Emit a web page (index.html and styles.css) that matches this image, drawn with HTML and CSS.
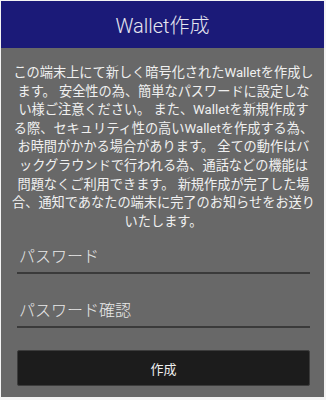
FILE: index.html
```html
<!DOCTYPE html>
<html lang="ja">
<head>
<meta charset="utf-8">
<link rel="stylesheet" href="styles.css">
</head>
<body>
<div class="screen">
  <header class="appbar">Wallet作成</header>
  <main class="content">
    <p class="notice">この端末上にて新しく暗号化されたWalletを作成し<br>ます。 安全性の為、簡単なパスワードに設定しな<br>い様ご注意ください。 また、Walletを新規作成す<br>る際、セキュリティ性の高いWalletを作成する為、<br>お時間がかかる場合があります。 全ての動作はバ<br>ックグラウンドで行われる為、通話などの機能は<br>問題なくご利用できます。 新規作成が完了した場<br>合、通知であなたの端末に完了のお知らせをお送り<br>いたします。</p>
    <div class="field">パスワード</div>
    <div class="field">パスワード確認</div>
    <button class="btn">作成</button>
  </main>
</div>
</body>
</html>
```
FILE: styles.css
```css
html, body {
  margin: 0;
  padding: 0;
  background: #f4f4f4;
}
.screen {
  width: 323px;
  height: 396px;
  margin: 1px 0 0 1px;
  background: #686868;
  display: flex;
  flex-direction: column;
  font-family: "Roboto", "Noto Sans CJK JP", sans-serif;
  overflow: hidden;
}
.appbar {
  height: 47px;
  background: #1b1a78;
  color: #e6e6f0;
  font-size: 20px;
  font-weight: 300;
  display: flex;
  align-items: center;
  justify-content: center;
  flex-shrink: 0;
}
.content {
  display: flex;
  flex-direction: column;
  padding: 16px 14px 0 16px;
}
.notice {
  margin: 0 -12px;
  color: #f0f0f0;
  font-size: 13.2px;
  line-height: 18.6px;
  text-align: center;
  white-space: nowrap;
}
.field {
  color: #e8e8e8;
  font-size: 16px;
  font-weight: 300;
  line-height: 22px;
  padding: 0 0 4px 2px;
  border-bottom: 2px solid #3a3a3a;
  margin-top: 26px;
}
.field:first-of-type {
  margin-top: 15px;
}
.btn {
  margin-top: 22px;
  height: 36px;
  background: #1c1c1c;
  border: 1px solid #3c3c3c;
  border-radius: 2px;
  color: #eeeeee;
  font-family: "Roboto", "Noto Sans CJK JP", sans-serif;
  font-size: 13px;
  padding: 0;
}
```
